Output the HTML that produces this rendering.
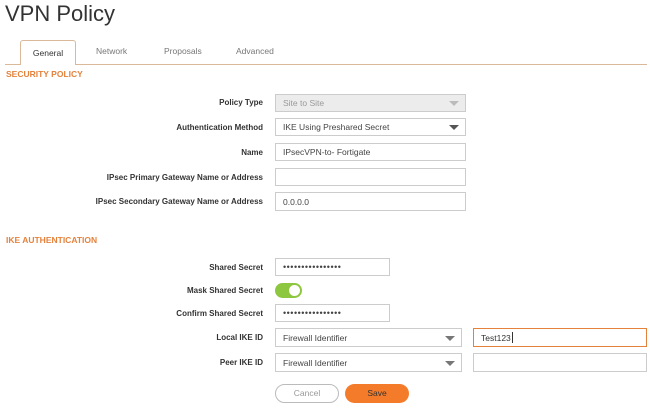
<!DOCTYPE html>
<html><head><style>
body{margin:0;width:650px;height:409px;background:#fff;font-family:"Liberation Sans",sans-serif;position:relative;overflow:hidden;color:#333}
.a{position:absolute}
.lbl{position:absolute;right:387px;font-size:8px;font-weight:bold;color:#333;white-space:nowrap}
.in{position:absolute;left:275px;border:1px solid #ccc;box-sizing:border-box;font-size:8.5px;color:#444;padding-left:7px;display:flex;align-items:center;background:#fff}
.arr{position:absolute;right:6px;top:50%;margin-top:-2px;width:0;height:0;border-left:5px solid transparent;border-right:5px solid transparent;border-top:5px solid #777}
.sec{position:absolute;left:6px;font-size:8.5px;font-weight:bold;color:#e4823c}
.dots{letter-spacing:0.5px;font-size:9px}
</style></head><body>
<div class="a" style="left:5px;top:1px;font-size:22px;color:#333">VPN Policy</div>
<div class="a" style="left:5px;top:64px;width:642px;height:1px;background:#d9b99a"></div>
<div class="a" style="left:20px;top:40px;width:56px;height:25px;border:1px solid #d9b99a;border-bottom:none;border-radius:3px 3px 0 0;box-sizing:border-box;background:#fff;font-size:8.5px;text-align:center;line-height:24px">General</div>
<div class="a" style="left:96px;top:46px;font-size:8.5px;color:#777">Network</div>
<div class="a" style="left:164px;top:46px;font-size:8.5px;color:#777">Proposals</div>
<div class="a" style="left:236px;top:46px;font-size:8.5px;color:#777">Advanced</div>
<div class="sec" style="top:69px">SECURITY POLICY</div>

<div class="lbl" style="top:98px">Policy Type</div>
<div class="in" style="top:94px;width:191px;height:18px;background:#ececec;color:#999">Site to Site<span class="arr" style="border-top-color:#bbb"></span></div>
<div class="lbl" style="top:123px">Authentication Method</div>
<div class="in" style="top:118px;width:191px;height:18px">IKE Using Preshared Secret<span class="arr" style="border-top-color:#555"></span></div>
<div class="lbl" style="top:148px">Name</div>
<div class="in" style="top:143px;width:191px;height:18px">IPsecVPN-to- Fortigate</div>
<div class="lbl" style="top:173px">IPsec Primary Gateway Name or Address</div>
<div class="in" style="top:168px;width:191px;height:18px"></div>
<div class="lbl" style="top:197px">IPsec Secondary Gateway Name or Address</div>
<div class="in" style="top:192px;width:191px;height:19px">0.0.0.0</div>

<div class="sec" style="top:235px">IKE AUTHENTICATION</div>
<div class="lbl" style="top:263px">Shared Secret</div>
<div class="in dots" style="top:258px;width:115px;height:18px">••••••••••••••••</div>
<div class="lbl" style="top:286px">Mask Shared Secret</div>
<div class="a" style="left:275px;top:283px;width:27px;height:15px;border-radius:8px;background:#8dc63f"><div class="a" style="right:2px;top:2px;width:11px;height:11px;border-radius:50%;background:#fff"></div></div>
<div class="lbl" style="top:309px">Confirm Shared Secret</div>
<div class="in dots" style="top:304px;width:115px;height:18px">••••••••••••••••</div>
<div class="lbl" style="top:333px">Local IKE ID</div>
<div class="in" style="top:328px;width:187px;height:19px">Firewall Identifier<span class="arr"></span></div>
<div class="in" style="left:473px;top:328px;width:174px;height:19px;border-color:#e4823c;color:#333">Test123<span style="display:inline-block;width:1px;height:11px;background:#333;margin-left:1px"></span></div>
<div class="lbl" style="top:358px">Peer IKE ID</div>
<div class="in" style="top:353px;width:187px;height:19px">Firewall Identifier<span class="arr"></span></div>
<div class="in" style="left:473px;top:353px;width:174px;height:19px"></div>
<div class="a" style="left:275px;top:384px;width:64px;height:19px;border:1px solid #bbb;border-radius:10px;box-sizing:border-box;font-size:8.5px;color:#999;text-align:center;line-height:17px">Cancel</div>
<div class="a" style="left:345px;top:384px;width:64px;height:19px;border-radius:10px;background:#f47b2a;font-size:8.5px;color:#333;text-align:center;line-height:19px">Save</div>
</body></html>
